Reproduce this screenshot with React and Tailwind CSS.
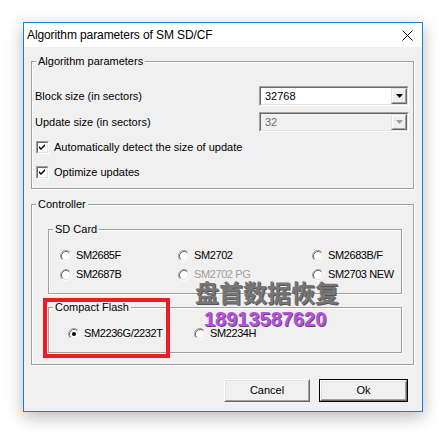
import React from "react";

function Radio({ checked }) {
  return (
    <svg width="12" height="12" viewBox="0 0 12 12" className="shrink-0">
      <circle cx="6" cy="6" r="5" fill="#ffffff" />
      <path d="M2.11 9.89 A5.5 5.5 0 0 1 9.89 2.11" fill="none" stroke="#a0a0a0" strokeWidth="1" />
      <path d="M9.89 2.11 A5.5 5.5 0 0 1 2.11 9.89" fill="none" stroke="#ffffff" strokeWidth="1" />
      <path d="M2.82 9.18 A4.5 4.5 0 0 1 9.18 2.82" fill="none" stroke="#696969" strokeWidth="1" />
      <path d="M9.18 2.82 A4.5 4.5 0 0 1 2.82 9.18" fill="none" stroke="#e3e3e3" strokeWidth="1" />
      {checked && <circle cx="6" cy="6" r="2" fill="#000000" />}
    </svg>
  );
}

function RadioItem({ label, checked, disabled }) {
  return (
    <div className="flex items-center h-[19px] gap-[4px]">
      <Radio checked={checked} />
      <span className={"tracking-[-0.4px] " + (disabled ? "text-[#a0a0a0]" : "text-black")}>{label}</span>
    </div>
  );
}

function CheckItem({ label, className }) {
  return (
    <div className={"flex items-center h-[13px] gap-[5px] " + className}>
      <div className="ml-[1px] w-[13px] h-[13px] border border-t-[#a0a0a0] border-l-[#a0a0a0] border-b-white border-r-white">
        <div className="w-full h-full border border-t-[#696969] border-l-[#696969] border-b-[#e3e3e3] border-r-[#e3e3e3] bg-white flex items-center justify-center">
          <svg width="7" height="7" viewBox="0 0 7 7">
            <path d="M0 2 L2 4 L6 0 L6 2 L2 6 L0 4 Z" fill="#000" />
          </svg>
        </div>
      </div>
      <span>{label}</span>
    </div>
  );
}

function Combo({ value, disabled }) {
  return (
    <div className="w-[150px] h-[20px] border border-t-[#a0a0a0] border-l-[#a0a0a0] border-b-white border-r-white">
      <div
        className={
          "w-full h-full border border-t-[#696969] border-l-[#696969] border-b-[#e3e3e3] border-r-[#e3e3e3] flex items-center " +
          (disabled ? "bg-[#f0f0f0]" : "bg-white")
        }
      >
        <span className={"flex-1 pl-[4px] " + (disabled ? "text-[#6d6d6d]" : "text-black")}>{value}</span>
        <div className="w-[16px] h-full border border-t-[#e3e3e3] border-l-[#e3e3e3] border-b-[#696969] border-r-[#696969]">
          <div className="w-full h-full border border-t-white border-l-white border-b-[#a0a0a0] border-r-[#a0a0a0] bg-[#f0f0f0] flex items-center justify-center">
            <svg width="7" height="4" viewBox="0 0 7 4">
              <path d="M0 0 H7 L3.5 4 Z" fill={disabled ? "#a0a0a0" : "#000"} />
            </svg>
          </div>
        </div>
      </div>
    </div>
  );
}

function Group({ title, className, children }) {
  return (
    <fieldset
      className={
        "border border-[#a0a0a0] shadow-[inset_1px_1px_0_#ffffff,1px_1px_0_#ffffff] " + (className || "")
      }
    >
      <legend className="ml-[4px] px-[2px] leading-[13px] bg-[#f0f0f0]">{title}</legend>
      {children}
    </fieldset>
  );
}

function Button({ label, isDefault }) {
  return (
    <div className={"h-[23px] " + (isDefault ? "w-[89px] border border-black" : "w-[86px]")}>
      <div className="w-full h-full border border-t-white border-l-white border-b-[#696969] border-r-[#696969]">
        <div className="w-full h-full border border-t-[#e3e3e3] border-l-[#e3e3e3] border-b-[#a0a0a0] border-r-[#a0a0a0] bg-[#f0f0f0] flex items-center justify-center">
          {label}
        </div>
      </div>
    </div>
  );
}

export default function App() {
  return (
    <div className="relative w-[442px] h-[434px] bg-white pl-[23px] pt-[22px] font-['Liberation_Sans',Arial,sans-serif]">
      <div className="w-[400px] h-[390px] border border-[#1a7fd4] bg-[#f0f0f0] flex flex-col shadow-[0_5px_16px_rgba(0,0,0,0.28)]">
        <div className="h-[24px] bg-white flex items-center justify-between pl-[3px] pr-[9px] text-[12px] text-black">
          <span className="tracking-[-0.1px]">Algorithm parameters of SM SD/CF</span>
          <svg width="11" height="11" viewBox="0 0 11 11">
            <path d="M0.5 0.5 L10.5 10.5 M10.5 0.5 L0.5 10.5" stroke="#000" strokeWidth="1" />
          </svg>
        </div>
        <div className="flex flex-col text-[11px] text-black">
          <Group title="Algorithm parameters" className="ml-[7px] mr-[8px] mt-[8px]">
            <div className="pt-[18px] pl-[3px] pr-[4px] pb-[9px]">
              <div className="flex items-center justify-between h-[20px]">
                <span>Block size (in sectors)</span>
                <Combo value="32768" />
              </div>
              <div className="flex items-center justify-between h-[20px] mt-[6px]">
                <span>Update size (in sectors)</span>
                <Combo value="32" disabled />
              </div>
              <CheckItem label="Automatically detect the size of update" className="mt-[9px]" />
              <CheckItem label="Optimize updates" className="mt-[12px]" />
            </div>
          </Group>
          <Group title="Controller" className="ml-[7px] mr-[8px] mt-[9px]">
            <div className="pb-[11px]">
              <Group title="SD Card" className="ml-[16px] mr-[11px] mt-[12px]">
                <div className="pt-[10px] pb-[9px] pl-[11px] grid grid-cols-[118px_134px_1fr]">
                  <RadioItem label="SM2685F" />
                  <RadioItem label="SM2702" />
                  <RadioItem label="SM2683B/F" />
                  <RadioItem label="SM2687B" />
                  <RadioItem label="SM2702 PG" disabled />
                  <RadioItem label="SM2703 NEW" />
                </div>
              </Group>
              <Group title="Compact Flash" className="ml-[16px] mr-[11px] mt-[7px]">
                <div className="pt-[10px] pb-[9px] pl-[19px] grid grid-cols-[126px_1fr]">
                  <RadioItem label="SM2236G/2232T" checked />
                  <RadioItem label="SM2234H" />
                </div>
              </Group>
            </div>
          </Group>
          <div className="flex justify-end gap-[9px] mt-[14px] mr-[14px]">
            <Button label="Cancel" />
            <Button label="Ok" isDefault />
          </div>
        </div>
      </div>

      <div className="absolute left-[43px] top-[298px] w-[127px] h-[60px] border-[4px] border-[#ed1c24]" />

      <div className="absolute left-[195px] top-[280px] text-[24px] leading-none font-bold text-[#767676] font-['Noto_Sans_CJK_SC',sans-serif] [text-shadow:1px_1px_0_#555555]">
        盘首数据恢复
      </div>
      <div className="absolute left-[204px] top-[309px] text-[20px] leading-none font-bold text-[#bd4de8] font-['Liberation_Sans',Arial,sans-serif] [text-shadow:1px_1px_0_#555555]">
        18913587620
      </div>
    </div>
  );
}
